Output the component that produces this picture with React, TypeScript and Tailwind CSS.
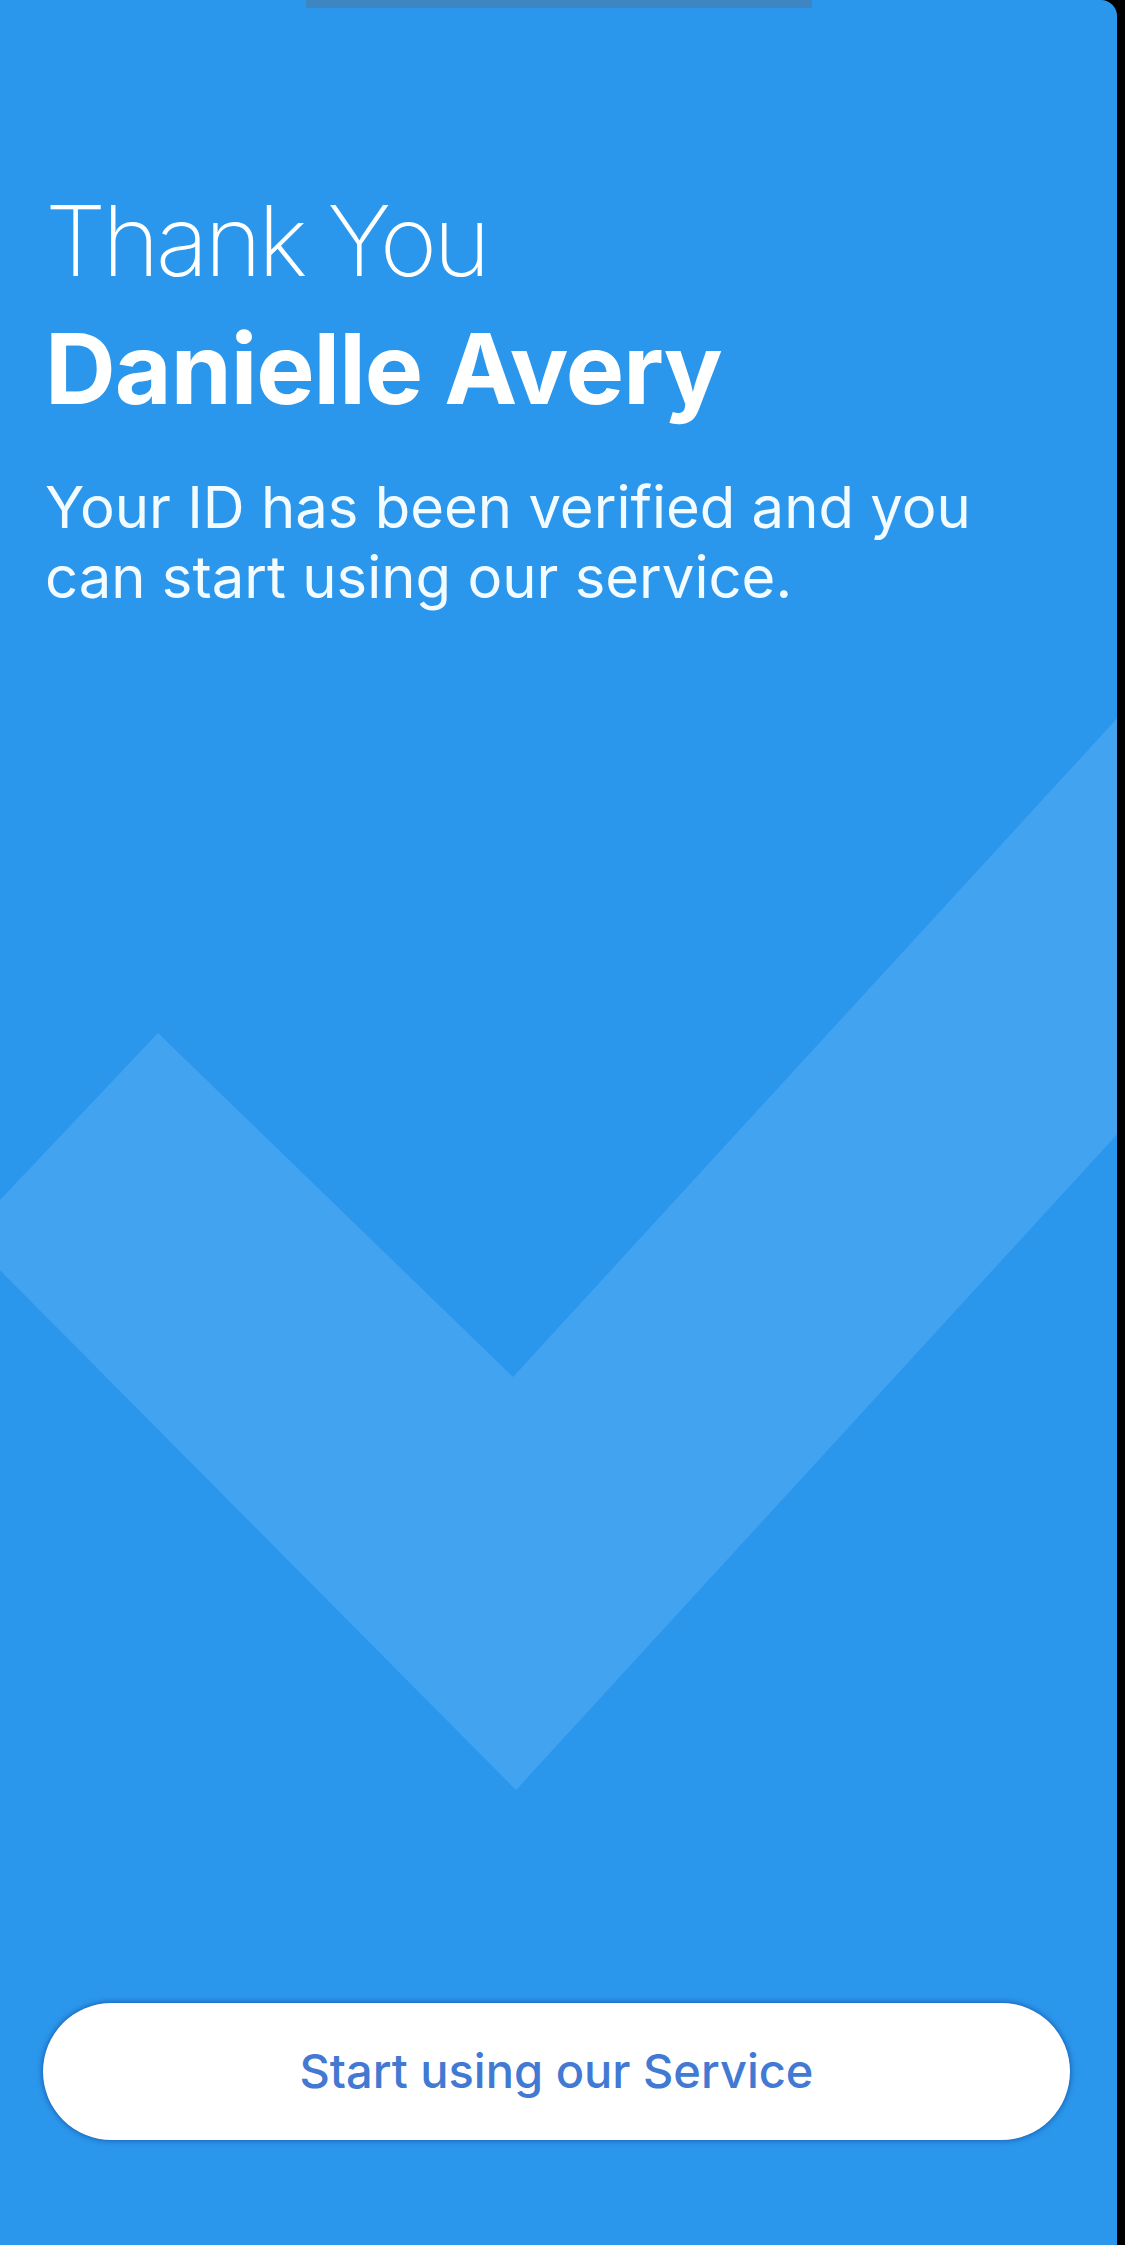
export default function App() {
  return (
    <div className="w-[1125px] h-[2245px] bg-black overflow-hidden" style={{ fontFamily: "Inter, 'Noto Sans', sans-serif" }}>
      <div className="relative w-[1117px] h-full bg-[#2b97ec] rounded-tr-[16px] overflow-hidden flex flex-col">
        {/* notch */}
        <div className="absolute top-0 left-[306px] w-[506px] h-[8px] bg-[#3e86c2]" />

        {/* big check mark in background */}
        <svg className="absolute inset-0" width="1117" height="2245" viewBox="0 0 1117 2245">
          <polygon points="158,1033 513,1377 1200,628 1200,1044 516,1790 -34,1236" fill="#42a3f0" />
        </svg>

        <div className="relative px-[45px] pt-[177px] text-white">
          <h1 className="text-[98px] leading-[128px] font-extralight tracking-[-4px]">Thank You</h1>
          <h2 className="text-[98px] leading-[128px] font-bold tracking-[-1px]">Danielle Avery</h2>
          <p className="mt-[39px] text-[58px] leading-[70px] text-[#f2fbff]">
            Your ID has been verified and you
            <br />
            can start using our service.
          </p>
        </div>

        <div className="relative mt-auto px-[43px] pb-[105px]">
          <button className="w-[1027px] h-[137px] rounded-full bg-white shadow-[0_0_6px_rgba(10,50,130,0.7)] text-[47px] font-medium text-[#4179d3]">
            Start using our Service
          </button>
        </div>
      </div>
    </div>
  );
}
